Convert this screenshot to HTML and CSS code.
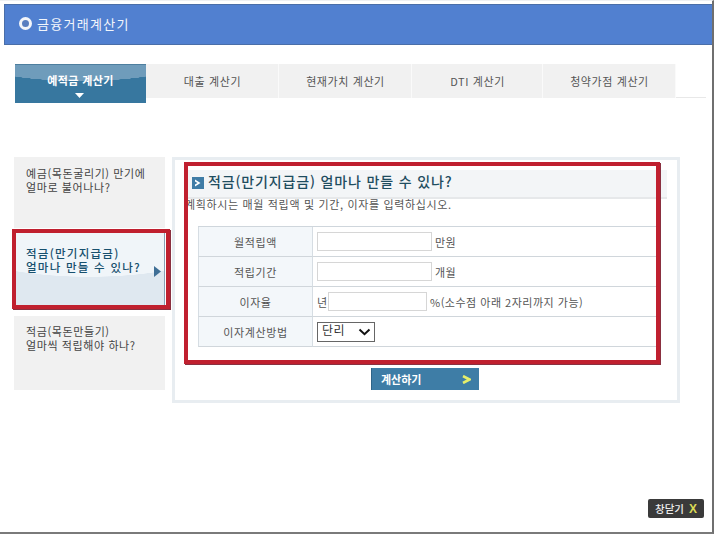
FILE: index.html
```html
<!DOCTYPE html>
<html lang="ko">
<head>
<meta charset="utf-8">
<title>금융거래계산기</title>
<link rel="stylesheet" href="styles.css">
</head>
<body>
<div class="window">
  <header class="header"><span class="ring"></span><h1>금융거래계산기</h1></header>
  <nav class="tabs">
    <a class="tab active">예적금 계산기<svg class="caret" width="9" height="5" viewBox="0 0 9 5"><path d="M0 0H9L4.500 5Z" fill="#fff"/></svg></a>
    <a class="tab">대출 계산기</a>
    <a class="tab">현재가치 계산기</a>
    <a class="tab">DTI 계산기</a>
    <a class="tab">청약가점 계산기</a>
  </nav>
  <main class="content">
    <aside class="side">
      <div class="side-item">예금(목돈굴리기) 만기에<br>얼마로 불어나나?</div>
      <div class="side-item selected">적금(만기지급금)<br>얼마나 만들 수 있나?<svg class="side-arrow" width="7" height="11" viewBox="0 0 7 11"><path d="M0 0L7 5.500 0 11Z" fill="#3f6f96"/></svg></div>
      <div class="side-item third">적금(목돈만들기)<br>얼마씩 적립해야 하나?</div>
      <div class="mark mark-side"></div>
    </aside>
    <section class="panel-wrap">
      <div class="panel">
        <h2 class="title"><svg class="title-icon" width="12" height="12" viewBox="0 0 12 12"><rect width="12" height="12" fill="#3f7ca6"/><path d="M3 2.500L8.500 6 3 9.500V7.500L5.500 6 3 4.500Z" fill="#fff"/></svg>적금(만기지급금) 얼마나 만들 수 있나?</h2>
        <p class="desc">계획하시는 매월 적립액 및 기간, 이자를 입력하십시오.</p>
        <div class="table">
          <div class="th">월적립액</div>
          <div class="td"><span class="input wide"></span><span>만원</span></div>
          <div class="th">적립기간</div>
          <div class="td"><span class="input wide"></span><span>개월</span></div>
          <div class="th">이자율</div>
          <div class="td"><span class="year">년</span><span class="input rate"></span><span>%(소수점 아래 2자리까지 가능)</span></div>
          <div class="th">이자계산방법</div>
          <div class="td"><span class="select">단리<svg width="13" height="8" viewBox="0 0 13 8"><path d="M1.500 1.500L6.500 6.200 11.500 1.500" fill="none" stroke="#111" stroke-width="2"/></svg></span></div>
        </div>
      </div>
      <div class="actions">
        <a class="calc">계산하기<svg width="9" height="9" viewBox="0 0 9 9"><path d="M1 1L7.500 4.500 1 8" fill="none" stroke="#e6ee6a" stroke-width="2.600"/></svg></a>
      </div>
      <div class="mark mark-main"></div>
    </section>
  </main>
  <footer class="foot"><a class="close">창닫기<span class="close-x">X</span></a></footer>
</div>
</body>
</html>
```
FILE: styles.css
```css
* { box-sizing: border-box; }
html, body { margin: 0; padding: 0; background: #fff; }
body {
  width: 720px;
  height: 539px;
  overflow: hidden;
  font-family: "Noto Sans CJK KR", "Noto Sans", sans-serif;
  color: #444;
}
.window {
  width: 714px;
  height: 534px;
  display: flex;
  flex-direction: column;
  padding: 4px 0 0 4px;
  border-right: 2px solid #6f6f6f;
  border-bottom: 2px solid #7a7a7a;
  border-top: 1px solid #eef0f2;
}
.header {
  height: 41px;
  margin-top: -1px;
  flex: none;
  display: flex;
  align-items: center;
  gap: 5px;
  padding: 0 0 2px 14px;
  background: #5180d0;
  border: 1px solid #4a6ea8;
  border-width: 1px 0 1px 1px;
  color: #f2f6fc;
}
.header h1 { margin: -1px 0 0; font-size: 13px; font-weight: 400; letter-spacing: 1.3px; }
.ring {
  width: 13px;
  height: 13px;
  border-radius: 50%;
  border: 3.500px solid #f4f6fa;
  background: #5a7fc0;
}
.tabs {
  display: flex;
  margin: 19px 6px 0 11px;
  height: 39px;
  background: linear-gradient(#fff 33px, #e8e8e8 33px, #e8e8e8 34px, #fff 34px);
  flex: none;
}
.tab {
  width: 133px;
  height: 34px;
  display: flex;
  align-items: center;
  justify-content: center;
  padding-left: 1px;
  background: #f1f1f1;
  border-right: 1px solid #fafafa;
  font-size: 11px;
  color: #555;
  letter-spacing: .6px;
}
.tab:nth-child(4) { width: 131px; }
.tab.active {
  position: relative;
  width: 131px;
  height: 39px;
  padding: 0 0 8px;
  background: radial-gradient(ellipse 95px 16px at 50% 0, #6f9cbb 99%, #37779f 100%);
  border: 0;
  border-top: 1px solid #4e7f9f;
  color: #fff;
  font-weight: 700;
  letter-spacing: .4px;
}
.caret { position: absolute; left: 60px; bottom: 5px; }
.content {
  display: flex;
  margin: 54px 0 0 10px;
  flex: none;
}
.side {
  position: relative;
  width: 151px;
  height: 233px;
  display: flex;
  flex-direction: column;
  gap: 4px;
  flex: none;
}
.side-item {
  position: relative;
  height: 71px;
  flex: none;
  padding: 9px 0 0 12px;
  background: #f1f1f1;
  font-size: 11px;
  line-height: 14px;
  color: #444;
  letter-spacing: .6px;
}
.side-item.third { height: 74px; margin-top: 7px; padding-top: 8px; }
.side-item.selected {
  height: 73px;
  padding-top: 13px;
  background: radial-gradient(ellipse 150px 44px at 50% 0, #f0f5f9 99%, #dfe8f0 100%);
  border-top: 1px solid #7f9aa5;
  border-right: 1px solid #8aa0b4;
  color: #17506e;
  font-weight: 500;
  font-size: 11.500px;
  letter-spacing: 1.250px;
}
.side-arrow { position: absolute; right: 3px; top: 33px; }
.mark {
  position: absolute;
  border: 4px solid #c0202f;
  box-shadow: 1px 1px 0 #8a3040;
  pointer-events: none;
}
.mark-side { left: -2px; top: 72px; width: 158px; height: 80px; }
.panel-wrap {
  position: relative;
  width: 508px;
  height: 246px;
  margin-left: 7px;
  padding: 10px 13px 0 10px;
  border: 3px solid #e8edf1;
  flex: none;
}
.panel { width: 482px; }
.title {
  display: flex;
  align-items: center;
  gap: 4px;
  margin: 0;
  height: 29px;
  padding: 0 0 5px 7px;
  font-size: 14px;
  line-height: 1;
  font-weight: 500;
  letter-spacing: .85px;
  color: #1f4d5f;
  background: #f3f5f7;
  border-bottom: 2px solid #e6e8ea;
}
.title-icon { margin-top: 3px; }
.desc {
  margin: 0;
  height: 27px;
  font-size: 11px;
  line-height: 11px;
  letter-spacing: .65px;
  color: #555;
}
.table {
  display: grid;
  grid-template-columns: 115px 1fr;
  grid-auto-rows: 30px;
  width: 458px;
  margin-left: 13px;
  border-top: 1px solid #cfd6dc;
}
.th {
  display: flex;
  align-items: center;
  justify-content: center;
  background: #f3f7fa;
  border-left: 1px solid #d6dde3;
  border-right: 1px solid #d6dde3;
  border-bottom: 1px solid #d0d6db;
  font-size: 11px;
  letter-spacing: .6px;
  color: #555;
}
.td {
  display: flex;
  align-items: center;
  padding-left: 4px;
  border-bottom: 1px solid #d0d6db;
  font-size: 11px;
  letter-spacing: .5px;
  color: #555;
}
.input {
  display: block;
  height: 19px;
  background: #fff;
  border: 1px solid #d6d6d6;
}
.input.wide { width: 115px; margin-right: 3px; }
.input.rate { width: 99px; margin-right: 3px; }
.year { width: 11px; }
.select {
  width: 58px;
  height: 20px;
  display: flex;
  align-items: flex-start;
  justify-content: space-between;
  padding: 0 3px 0 4px;
  border: 1px solid #666;
  background: #fff;
  font-size: 12px;
  line-height: 13px;
  color: #333;
}
.select svg { margin-top: 5px; }
.mark-main { left: 9px; top: 2px; width: 476px; height: 202px; }
.actions {
  display: flex;
  justify-content: center;
  margin-top: 21px;
  padding-left: 1px;
}
.calc {
  width: 108px;
  height: 22px;
  display: flex;
  align-items: center;
  justify-content: space-between;
  padding: 0 8px 0 9px;
  background: #3e7da6;
  border-left: 1px solid #2f6488;
  color: #fff;
  font-size: 11px;
  font-weight: 700;
}
.foot {
  display: flex;
  justify-content: flex-end;
  padding-right: 8px;
  margin-top: 96px;
}
.close {
  width: 56px;
  height: 19px;
  display: flex;
  align-items: center;
  padding-left: 7px;
  gap: 5px;
  border-radius: 2px;
  background: #3a3a3a;
  color: #eee;
  font-size: 10.500px;
  font-weight: 500;
}
.close-x { color: #dada55; font-weight: 700; font-family: "Liberation Sans", sans-serif; font-size: 12px; }
```
